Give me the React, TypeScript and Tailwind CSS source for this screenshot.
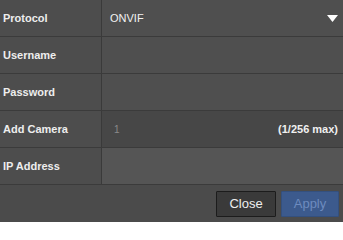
const rows = [
  { label: "Protocol", kind: "select" },
  { label: "Username", kind: "text" },
  { label: "Password", kind: "text" },
  { label: "Add Camera", kind: "count" },
  { label: "IP Address", kind: "ip" },
];

const Row = ({ label, kind }: { label: string; kind: string }) => {
  const valueBg =
    kind === "count" ? "bg-[#474747]" : kind === "ip" ? "bg-[#555555]" : "bg-[#4f4f4f]";
  return (
    <div className="flex h-[37px] border-b border-[#3b3b3b] shadow-[inset_0_-3px_0_-2px_#454545]">
      <div className="flex w-[102px] items-center border-r border-[#3a3a3a] bg-[#4d4d4d] pl-[3px] text-[11px] font-bold text-[#eeeeee]">
        {label}
      </div>
      <div className={`flex flex-1 items-center ${valueBg} pl-[8px] pr-[5px] text-[11px]`}>
        {kind === "select" && (
          <>
            <span className="text-[#f2f2f2]">ONVIF</span>
            <svg className="ml-auto mr-[0px]" width="11" height="7" viewBox="0 0 11 7">
              <polygon points="0,0 11,0 5.5,7" fill="#ffffff" />
            </svg>
          </>
        )}
        {kind === "count" && (
          <>
            <span className="pl-[4px] text-[10px] text-[#8a8a8a]">1</span>
            <span className="ml-auto font-bold text-[#f0f0f0]">(1/256 max)</span>
          </>
        )}
      </div>
    </div>
  );
};

export default function App() {
  return (
    <div
      className="flex h-[222px] w-[343px] flex-col bg-[#4b4b4b]"
      style={{ fontFamily: '"Liberation Sans", Arial, sans-serif' }}
    >
      {rows.map((r) => (
        <Row key={r.label} label={r.label} kind={r.kind} />
      ))}
      <div className="flex flex-1 items-center justify-end gap-[5px] pr-[4px] pt-[1px]">
        <button className="h-[26px] w-[60px] rounded-[1px] border border-[#1c1c1c] bg-[#3a3a3a] text-[13px] text-[#eeeeee]">
          Close
        </button>
        <button className="h-[26px] w-[58px] rounded-[1px] border border-[#34507e] bg-[#3c5a8d] text-[13px] text-[#6d8bbf]">
          Apply
        </button>
      </div>
    </div>
  );
}
